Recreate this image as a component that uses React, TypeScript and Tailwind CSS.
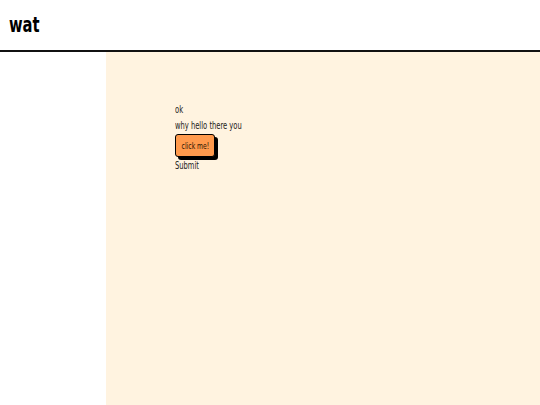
export default function App() {
  return (
    <div
      className="min-h-screen flex flex-col bg-white text-black"
      style={{ fontFamily: '"DejaVu Sans Condensed", "DejaVu Sans", sans-serif' }}
    >
      <header className="h-[52px] flex items-center px-[9px] border-b-2 border-[#111]">
        <h1 className="text-[21px] font-bold pt-[1px] scale-x-[0.78] origin-left">wat</h1>
      </header>
      <div className="flex flex-1">
        <aside className="w-[106px] bg-white" />
        <main className="flex-1 bg-[#fff3e0] pl-[69px] pt-[50px] text-[10px] leading-[16px] text-[#1a1a1a]">
          <p className="scale-x-75 origin-left">ok</p>
          <p className="scale-x-75 origin-left">why hello there you</p>
          <button className="w-[40px] h-[23px] bg-[#ff9a4d] border border-black rounded-[3px] shadow-[3px_3px_0_#000] flex items-center justify-center">
            <span className="text-[9px] text-[#2a1200] scale-x-75">click me!</span>
          </button>
          <p className="mt-[2px] leading-[14px] scale-x-75 origin-left">Submit</p>
        </main>
      </div>
    </div>
  );
}
